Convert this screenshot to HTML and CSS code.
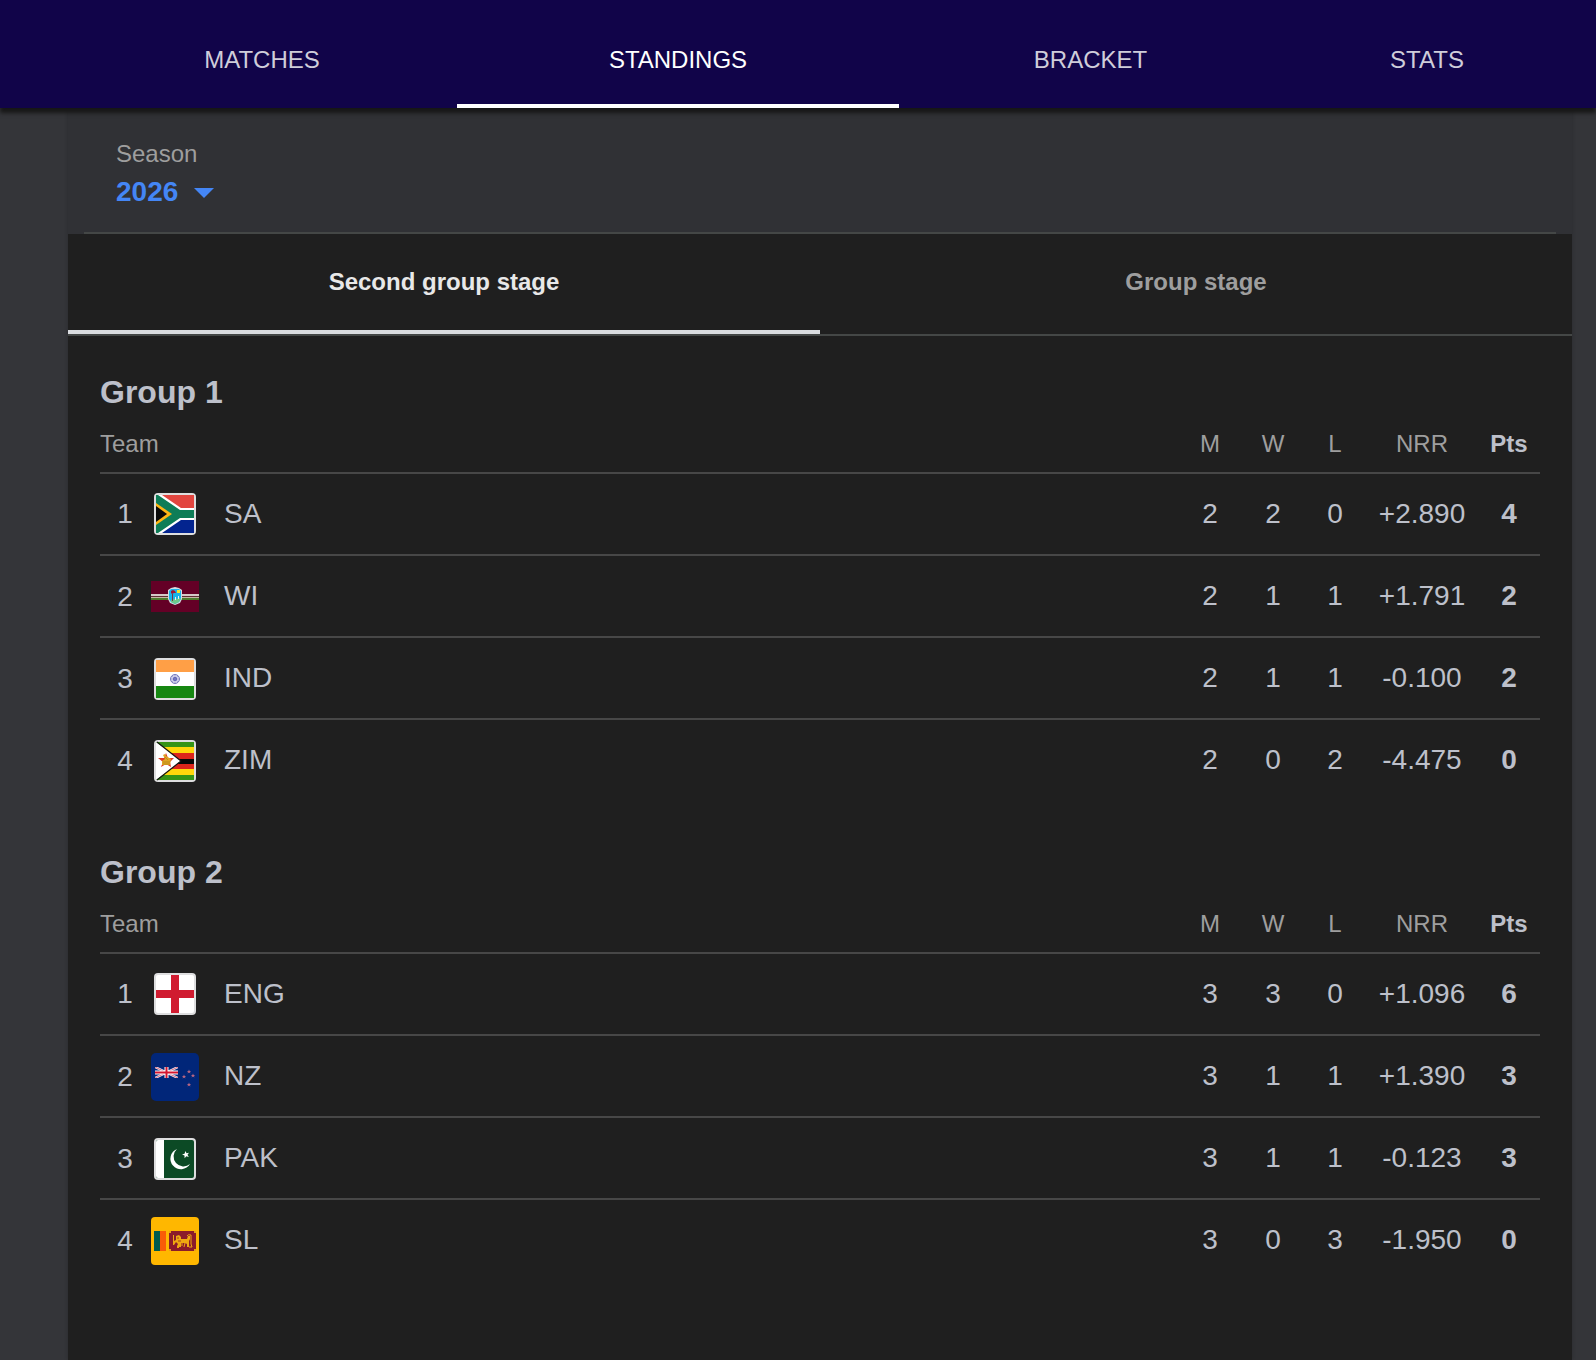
FILE: index.html
```html
<!DOCTYPE html>
<html lang="en">
<head>
<meta charset="utf-8">
<meta name="viewport" content="width=device-width, initial-scale=1">
<title>Standings</title>
<link rel="stylesheet" href="styles.css">
</head>
<body>
<nav class="nav">
  <a class="nav-tab nav-matches" href="#matches">MATCHES</a>
  <a class="nav-tab nav-standings active" href="#standings" aria-current="page">STANDINGS</a>
  <a class="nav-tab nav-bracket" href="#bracket">BRACKET</a>
  <a class="nav-tab nav-stats" href="#stats">STATS</a>
</nav>
<main class="card">
  <div class="season">
    <label class="season-label" for="season">Season</label>
    <div class="season-picker">
      <select class="season-select" id="season"><option>2026</option></select>
      <svg class="season-arrow" width="20" height="10" viewBox="0 0 20 10" aria-hidden="true"><path d="M0 0H20L10 10Z" fill="currentColor"/></svg>
    </div>
  </div>
  <div class="stages" role="tablist">
    <button class="stage active" type="button" role="tab" aria-selected="true">Second group stage</button>
    <button class="stage" type="button" role="tab" aria-selected="false">Group stage</button>
  </div>

  <section class="group">
    <h2 class="group-title">Group 1</h2>
    <table class="standings">
      <thead>
        <tr><th class="team-head" colspan="3" scope="col">Team</th><th class="stat played" scope="col">M</th><th class="stat" scope="col">W</th><th class="stat" scope="col">L</th><th class="rate" scope="col">NRR</th><th class="stat points" scope="col">Pts</th></tr>
      </thead>
      <tbody>
        <tr>
          <td class="rank">1</td>
          <td class="flag"><svg width="48" height="48" viewBox="0 0 48 48" aria-hidden="true">
            <rect x="3" y="3" width="42" height="42" rx="4" fill="#dededf"/>
            <svg x="5" y="5" width="38" height="38" viewBox="0 0 38 38">
              <path d="M0 0H38V19H0Z" fill="#e2453f"/><path d="M0 19H38V38H0Z" fill="#03248f"/>
              <path d="M0 0H6L25 13H38V25H25L6 38H0Z" fill="#fff"/>
              <path d="M0 0H2L24 15H38V23H24L2 38H0Z" fill="#0d7d57"/>
              <path d="M0 8L16 19L0 30Z" fill="#fdb515"/><path d="M0 11L11 19L0 27Z" fill="#090909"/>
            </svg></svg></td>
          <td class="team">SA</td><td class="stat">2</td><td class="stat">2</td><td class="stat">0</td><td class="rate">+2.890</td><td class="stat points">4</td>
        </tr>
        <tr>
          <td class="rank">2</td>
          <td class="flag"><svg width="48" height="48" viewBox="0 0 48 48" aria-hidden="true">
            <rect y="8" width="48" height="31" fill="#640026"/>
            <path d="M0 21H48V23H0Z" fill="#d5c9c7"/><path d="M0 23H48V24H0Z" fill="#5e2e32"/><path d="M0 24H48V25H0Z" fill="#c7b5a6"/><path d="M0 25H48V27H0Z" fill="#4c7c2c"/>
            <path d="M17 17L20 15L24 14L28 15L31 17V26L29 30L24 32L19 30L17 26Z" fill="#d5dde0"/>
            <path d="M18 18L20 16H28L30 18V26L28 29L24 31L20 29L18 26Z" fill="#18b4ea"/>
            <path d="M24 26L30 25L28 29L24 31L20 29V27Z" fill="#6cc98a"/>
            <path d="M20 18L22 17L24 18L25 20L23 20L21 21L20 20Z" fill="#a01733"/><path d="M21 21H22V28H21Z" fill="#723448"/>
            <path d="M26 17H29V20H26Z" fill="#f6e52e"/><path d="M24 24H25V27H24ZM27 23H28V26H27Z" fill="#e6f2f2"/>
          </svg></td>
          <td class="team">WI</td><td class="stat">2</td><td class="stat">1</td><td class="stat">1</td><td class="rate">+1.791</td><td class="stat points">2</td>
        </tr>
        <tr>
          <td class="rank">3</td>
          <td class="flag"><svg width="48" height="48" viewBox="0 0 48 48" aria-hidden="true">
            <rect x="3" y="3" width="42" height="42" rx="4" fill="#dededf"/>
            <path d="M5 5H43V17H5Z" fill="#ff9f46"/><path d="M5 17H43V31H5Z" fill="#fff"/><path d="M5 31H43V43H5Z" fill="#168711"/>
            <circle cx="24" cy="24" r="4.5" fill="#d5d6ee" stroke="#7577bd"/><circle cx="24" cy="24" r="2" fill="#484bab"/>
            <path d="M24 20V28M20 24H28M21 21L27 27M27 21L21 27" stroke="#8587c7" stroke-width=".5"/>
          </svg></td>
          <td class="team">IND</td><td class="stat">2</td><td class="stat">1</td><td class="stat">1</td><td class="rate">-0.100</td><td class="stat points">2</td>
        </tr>
        <tr>
          <td class="rank">4</td>
          <td class="flag"><svg width="48" height="48" viewBox="0 0 48 48" aria-hidden="true">
            <rect x="3" y="3" width="42" height="42" rx="4" fill="#dededf"/>
            <path d="M5 5H43V43H5Z" fill="#369416"/><path d="M5 10H43V38H5Z" fill="#ffd70b"/><path d="M5 16H43V32H5Z" fill="#dc251b"/><path d="M5 22H43V27H5Z" fill="#080808"/>
            <path d="M5 5L30 24L5 43Z" fill="#fff"/><path d="M6 5L30 24L6 43" fill="none" stroke="#151515" stroke-width="1.2"/>
            <path d="M15 16L17 21H23L19 25L20 30L15 27L10 30L12 25L7 21H13Z" fill="#df3a25"/>
            <path d="M12 18L14 17L15 19L20 22L19 28H11V24L14 22Z" fill="#dfa623"/><path d="M12 25H19M12 27H19M14 20L17 23" stroke="#a77816" stroke-width=".6"/>
          </svg></td>
          <td class="team">ZIM</td><td class="stat">2</td><td class="stat">0</td><td class="stat">2</td><td class="rate">-4.475</td><td class="stat points">0</td>
        </tr>
      </tbody>
    </table>
  </section>

  <section class="group">
    <h2 class="group-title">Group 2</h2>
    <table class="standings">
      <thead>
        <tr><th class="team-head" colspan="3" scope="col">Team</th><th class="stat played" scope="col">M</th><th class="stat" scope="col">W</th><th class="stat" scope="col">L</th><th class="rate" scope="col">NRR</th><th class="stat points" scope="col">Pts</th></tr>
      </thead>
      <tbody>
        <tr>
          <td class="rank">1</td>
          <td class="flag"><svg width="48" height="48" viewBox="0 0 48 48" aria-hidden="true">
            <rect x="3" y="3" width="42" height="42" rx="4" fill="#dededf"/><rect x="5" y="5" width="38" height="38" rx="2" fill="#fff"/>
            <path d="M20 5H28V20H43V28H28V43H20V28H5V20H20Z" fill="#d01b30"/>
          </svg></td>
          <td class="team">ENG</td><td class="stat">3</td><td class="stat">3</td><td class="stat">0</td><td class="rate">+1.096</td><td class="stat points">6</td>
        </tr>
        <tr>
          <td class="rank">2</td>
          <td class="flag"><svg width="48" height="48" viewBox="0 0 48 48" aria-hidden="true">
            <rect width="48" height="48" rx="5" fill="#012679"/>
            <svg x="4" y="14" width="23" height="11" viewBox="0 0 23 11">
              <path d="M0 0L23 11M23 0L0 11" stroke="#e6e6f1" stroke-width="2.4"/><path d="M0 0L23 11M23 0L0 11" stroke="#d84a62" stroke-width=".8"/>
              <path d="M11.5 0V11M0 5.5H23" stroke="#fff" stroke-width="4"/><path d="M11.5 0V11M0 5.5H23" stroke="#d3152e" stroke-width="2"/>
            </svg>
            <g fill="#b86582">
              <path id="star" d="M38 16.500L38.600 18L40 18L39 19L39.400 20.500L38 19.600L36.600 20.500L37 19L36 18L37.400 18Z"/>
              <use href="#star" x="-5" y="5"/><use href="#star" x="4" y="4"/><use href="#star" y="13"/>
            </g>
          </svg></td>
          <td class="team">NZ</td><td class="stat">3</td><td class="stat">1</td><td class="stat">1</td><td class="rate">+1.390</td><td class="stat points">3</td>
        </tr>
        <tr>
          <td class="rank">3</td>
          <td class="flag"><svg width="48" height="48" viewBox="0 0 48 48" aria-hidden="true">
            <rect x="3" y="3" width="42" height="42" rx="4" fill="#dededf"/><rect x="5" y="5" width="38" height="38" rx="2" fill="#0c4a25"/>
            <path d="M13 5H7Q5 5 5 7V41Q5 43 7 43H13Z" fill="#fff"/>
            <path d="M26 14A10.500 10.500 0 1 0 39 29A9 9 0 1 1 26 14Z" fill="#fff"/>
            <path d="M34.500 16L35.500 18.300L38 17.800L36.500 19.800L37.800 22L35.300 21.300L33.600 23.200L33.500 20.600L31 19.600L33.500 18.700Z" fill="#fff"/>
          </svg></td>
          <td class="team">PAK</td><td class="stat">3</td><td class="stat">1</td><td class="stat">1</td><td class="rate">-0.123</td><td class="stat points">3</td>
        </tr>
        <tr>
          <td class="rank">4</td>
          <td class="flag"><svg width="48" height="48" viewBox="0 0 48 48" aria-hidden="true">
            <rect width="48" height="48" rx="4" fill="#ffb700"/>
            <path d="M3 14H9V34H3Z" fill="#005b4d"/><path d="M9 14H15V34H9Z" fill="#f95c08"/><path d="M18 14H45V34H18Z" fill="#8b1b2a"/>
            <path d="M18 14H20V16H18ZM43 14H45V16H43ZM18 32H20V34H18ZM43 32H45V34H43Z" fill="#e9a017"/>
            <path d="M25 19L28 18L30 20V22H36L37 19H39V22L38 24V30H36V27L34 26H30V30H28V31H26V29L27 27L25 25L23 28H22V18H23V24L25 23Z" fill="#efa910"/>
            <path d="M36 19Q37 17 40 18V27L41 30H38M31 26V29M34 26L33 30" fill="none" stroke="#efa910" stroke-width="1"/>
            <path d="M26 21H28M27 24H30" stroke="#8b1b2a" stroke-width=".7"/>
          </svg></td>
          <td class="team">SL</td><td class="stat">3</td><td class="stat">0</td><td class="stat">3</td><td class="rate">-1.950</td><td class="stat points">0</td>
        </tr>
      </tbody>
    </table>
  </section>
</main>
</body>
</html>
```

FILE: styles.css
```css
* { box-sizing: border-box; }

body {
  margin: 0;
  min-height: 100vh;
  display: flex;
  flex-direction: column;
  background: #343539;
  color: #bdc0ca;
  font-family: "Liberation Sans", Arial, sans-serif;
  font-size: 24px;
  line-height: 28px;
}

/* Top navigation */
.nav {
  position: relative;
  z-index: 1;
  display: flex;
  height: 108px;
  padding: 0 24px 0 67px;
  background: #110449;
  box-shadow: 0 5px 4px #171717;
}
.nav-tab {
  display: flex;
  align-items: center;
  justify-content: center;
  padding-top: 16px;
  border-bottom: 4px solid transparent;
  color: #cfcdda;
  text-decoration: none;
}
.nav-matches { flex: 390 1 0; }
.nav-standings { flex: 442 1 0; }
.nav-bracket { flex: 383 1 0; }
.nav-stats { flex: 290 1 0; }
.nav-tab.active { color: #fff; border-bottom-color: #fff; }

/* Card */
.card {
  flex: 1;
  margin: 0 24px 0 68px;
  background: #1f1f1f;
  box-shadow: 0 0 4px rgba(0, 0, 0, .2);
}

.season {
  display: flex;
  flex-direction: column;
  align-items: flex-start;
  gap: 8px;
  height: 126px;
  padding: 32px 48px 0;
  background: linear-gradient(#444746, #444746) center bottom / calc(100% - 32px) 2px no-repeat #303135;
}
.season-label { color: #9e9e9e; }
.season-picker { position: relative; color: #4486f5; }
.season-select {
  display: block;
  width: 104px;
  height: 32px;
  margin: 0;
  padding: 0;
  border: 0;
  appearance: none;
  background: transparent;
  color: inherit;
  font: bold 28px/32px "Liberation Sans", Arial, sans-serif;
}
.season-arrow {
  position: absolute;
  top: 12px;
  right: 6px;
  pointer-events: none;
}

.stages {
  display: flex;
  height: 102px;
  border-bottom: 2px solid #444746;
}
.stage {
  flex: 1;
  padding: 0;
  border: 0;
  border-bottom: 4px solid transparent;
  background: transparent;
  color: #9e9e9e;
  font: bold 24px/28px "Liberation Sans", Arial, sans-serif;
}
.stage.active { color: #e8e8e8; border-bottom-color: #dadce0; }

/* Standings */
.group { padding: 38px 32px 16px; }
.group-title {
  margin: 0;
  font-size: 32px;
  line-height: 36px;
}
.standings {
  width: 100%;
  border-collapse: separate;
  border-spacing: 0;
}
th {
  padding: 20px 0 14px;
  border-bottom: 2px solid #474747;
  color: #9e9e9e;
  font-weight: normal;
  text-align: center;
}
td {
  height: 82px;
  padding: 0;
  border-bottom: 2px solid #474747;
  font-size: 28px;
  line-height: 32px;
  text-align: center;
  vertical-align: middle;
}
tr:last-child td { height: 80px; border-bottom: 0; }
.team-head, .team { text-align: left; }
.rank { width: 50px; }
.flag { width: 50px; }
.flag svg { display: block; margin: 0 1px; }
tr + tr .rank, tr + tr .flag { padding-top: 2px; }
.team { padding-left: 24px; }
.stat { width: 62px; }
.played { width: 64px; }
.rate { width: 112px; }
.points { color: inherit; font-weight: bold; }
```
